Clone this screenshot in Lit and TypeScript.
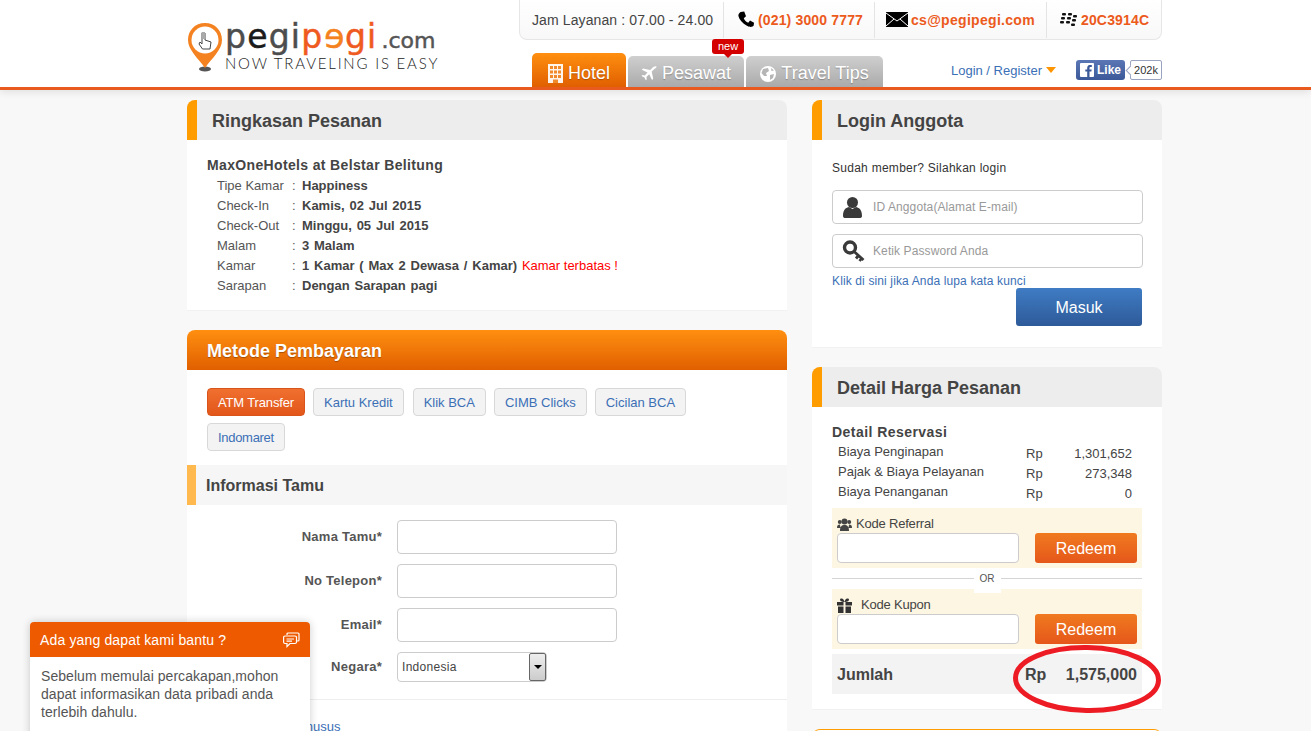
import { LitElement, html, css, svg } from "lit";
import { customElement } from "lit/decorators.js";

const icoPhone = svg`<path d="M4 1 L8 0.5 L10 6 L7.5 8 C8.5 10.5 10 12 12.5 13 L14.5 10.5 L19 13 L18.5 16.5 C17 18 14.5 18.5 11 16.5 C6 13.5 2.5 9.5 1.5 5.5 C1.2 3.5 2.5 2 4 1 Z" fill="#000"/>`;
const icoUser = svg`<circle cx="10" cy="6.5" r="5.5" fill="#3a3a3a"/><path d="M0.5 20 C0.5 13 4 11.5 6.5 11 L10 13 L13.5 11 C16 11.5 19.5 13 19.5 20 C19.5 21.5 18.5 22 17 22 L3 22 C1.5 22 0.5 21.5 0.5 20 Z" fill="#3a3a3a"/>`;
const icoKey = svg`<circle cx="7.5" cy="7.5" r="5.5" fill="none" stroke="#3a3a3a" stroke-width="3.4"/><path d="M11.5 11.5 L21 20 M16 15.5 L13.5 18.5 M19 18.5 L17 21" fill="none" stroke="#3a3a3a" stroke-width="2.8"/>`;

@customElement("app-root")
export class AppRoot extends LitElement {
  static styles = css`
    :host { display: block; position: relative; height: 731px; overflow: hidden; background: #f8f8f8; font-family: "Liberation Sans", Arial, sans-serif; color: #444; font-size: 12px; }
    * { box-sizing: border-box; }
    a { color: #3b6fb6; text-decoration: none; }
    .hdr { height: 90px; background: #fff; border-bottom: 3px solid #e85a1e; box-shadow: 0 2px 8px rgba(0,0,0,.1); }
    .wrap { width: 975px; margin-left: 187px; display: flex; justify-content: space-between; height: 87px; }
    .logo { width: 260px; padding-top: 18px; display: flex; gap: 2px; }
    .pin { width: 36px; height: 54px; flex: none; margin-top: 2px; }
    .lt { display: flex; flex-direction: column; }
    .lname { font-family: "DejaVu Sans", sans-serif; font-size: 33px; line-height: 38px; letter-spacing: 1.2px; color: #4d4d4d; white-space: nowrap; height: 38px; -webkit-text-stroke: .5px currentColor; }
    .lname .k { color: #1a1a1a; } .lname .o { color: #ef5a1f; } .lname .o2 { color: #f58220; display: inline-block; transform: scaleX(-1); }
    .lname .com { font-size: 22px; letter-spacing: 0; color: #555; margin-left: 4px; }
    .ltag { font-family: "Lato", sans-serif; font-weight: 300; font-size: 15px; line-height: 14px; letter-spacing: 1.8px; color: #222; white-space: nowrap; }
    .hr { width: 643px; display: flex; flex-direction: column; }
    .info { height: 40px; display: flex; align-items: center; background: linear-gradient(#fff,#f8f8f8); border: 1px solid #e6e6e6; border-top: 0; border-radius: 0 0 8px 8px; font-size: 14px; }
    .cell { height: 36px; display: flex; align-items: center; padding: 0 12px; border-left: 1px solid #e4e4e4; font-weight: 700; color: #ec5a1c; gap: 3px; white-space: nowrap; letter-spacing: .15px; }
    .cell:first-child { border: 0; font-weight: 400; color: #444; width: 203px; padding-left: 12px; letter-spacing: .11px; }
    .cell svg { flex: none; }
    .c2 { width: 151px; padding-left: 13px; } .c3 { width: 172px; padding-left: 11px; letter-spacing: .3px; } .c4 { width: 116px; padding-left: 12px; gap: 4px; }
    .navrow { display: flex; justify-content: space-between; align-items: flex-end; flex: 1; padding-left: 13px; }
    .tabs { display: flex; align-items: flex-end; gap: 2px; height: 47px; }
    .tab { position: relative; height: 31px; padding-top: 4px; border-radius: 5px 5px 0 0; background: linear-gradient(#cfcfcf,#aaa); color: #fff; font-size: 18px; display: flex; align-items: center; justify-content: center; gap: 5px; text-shadow: 0 1px 1px rgba(0,0,0,.25); }
    .tab.on { height: 34px; width: 94px; padding-top: 7px; background: linear-gradient(#ff8f10,#e05f00); }
    .t2 { width: 116px; } .t3 { width: 137px; }
    .new { position: absolute; top: -17px; left: 84px; width: 32px; height: 15px; background: #d40000; color: #fff; font-size: 11px; border-radius: 3px; text-align: center; line-height: 14px; text-shadow: none; }
    .new::after { content: ""; position: absolute; left: 12px; top: 15px; border: 4px solid transparent; border-top-color: #d40000; border-bottom: 0; }
    .navr { display: flex; align-items: center; height: 20px; margin-bottom: 7px; }
    .logr { display: flex; align-items: center; gap: 4px; font-size: 13px; margin-right: 20px; }
    .tri { width: 0; height: 0; border: 5px solid transparent; border-top: 6px solid #ff9500; border-bottom: 0; }
    .fb { width: 49px; height: 20px; background: linear-gradient(#5a76b5,#3b5998); border-radius: 3px; color: #fff; font-weight: 700; font-size: 12px; display: flex; align-items: center; gap: 3px; padding-left: 4px; }
    .fbn { position: relative; width: 32px; height: 20px; margin-left: 5px; border: 1px solid #9aa3c0; border-radius: 2px; background: #fff; font-size: 11px; color: #333; text-align: center; line-height: 18px; }
    .fbn::before { content: ""; position: absolute; left: -4px; top: 6px; width: 6px; height: 6px; background: #fff; border-left: 1px solid #9aa3c0; border-bottom: 1px solid #9aa3c0; transform: rotate(45deg); }
    .main { width: 975px; margin: 10px 0 0 187px; display: flex; justify-content: space-between; align-items: flex-start; }
    .col { display: flex; flex-direction: column; gap: 20px; }
    .l { width: 600px; } .r { width: 350px; }
    .card { background: #fff; border-radius: 8px 8px 0 0; overflow: hidden; box-shadow: 0 1px 1px rgba(0,0,0,.03); }
    .ch { height: 40px; background: #ededed; border-left: 10px solid #ff9c00; padding: 1px 0 0 15px; font-size: 18px; font-weight: 700; color: #444; line-height: 40px; }
    .ch.orange { background: linear-gradient(#ff8f10,#e05f00); border-left: 0; padding-left: 20px; color: #fff; text-shadow: 0 1px 1px rgba(0,0,0,.3); }
    .b1 { padding: 15px 20px 14px; height: 170px; }
    .htl { font-size: 14px; font-weight: 700; height: 21px; line-height: 20px; letter-spacing: .35px; }
    .rw { display: grid; grid-template-columns: 75px 10px 1fr; padding-left: 10px; line-height: 20px; font-size: 13px; color: #555; }
    .rw b { color: #444; word-spacing: 1.2px; } .rw i { font-style: normal; color: #f00; font-weight: 400; word-spacing: 0; }
    .chips { display: flex; flex-wrap: wrap; gap: 7px 8px; padding: 18px 20px 14px; }
    .chip { height: 28px; padding: 1px 10px 0; border: 1px solid #d8d8d8; border-radius: 4px; background: #f3f3f3; color: #3b6fb6; line-height: 26px; font-size: 13px; }
    .chip.on { background: linear-gradient(#f07030,#e2561a); border-color: #d9541a; color: #fff; letter-spacing: -.15px; }
    .chip.klik { margin-left: 1px; }
    .chip.ind { letter-spacing: -.3px; }
    .sh { height: 40px; background: #f6f6f6; border-left: 9px solid #ffb94f; padding: 1px 0 0 10px; font-size: 16px; font-weight: 700; line-height: 40px; }
    .form { display: flex; flex-direction: column; gap: 10px; padding: 15px 0 17px; border-bottom: 1px solid #eee; }
    .fr { display: flex; align-items: center; gap: 15px; }
    .fr label { width: 195px; padding-bottom: 2px; text-align: right; font-weight: 700; font-size: 13px; color: #555; letter-spacing: .25px; }
    .in { height: 34px; width: 220px; border: 1px solid #ccc; border-radius: 4px; background: #fff; }
    .sel { height: 30px; width: 150px; border: 1px solid #ccc; border-radius: 4px; display: flex; align-items: center; justify-content: space-between; padding-left: 4px; letter-spacing: .3px; }
    .arr { width: 17px; height: 28px; background: linear-gradient(#eee,#ccc); border: 1px solid #666; border-radius: 2px; display: flex; align-items: center; justify-content: center; }
    .arr::after { content: ""; border: 4px solid transparent; border-top: 4px solid #000; border-bottom: 0; }
    .mus { padding: 19px 0 0 40px; height: 60px; font-size: 13px; }
    .b2 { height: 207px; padding: 20px 20px 0; letter-spacing: .27px; }
    .lead { line-height: 16px; color: #333; }
    .lin { display: flex; align-items: center; width: 311px; height: 34px; margin-top: 14px; border: 1px solid #ccc; border-radius: 4px; padding-left: 9px; gap: 8px; color: #999; letter-spacing: .1px; }
    .lin svg { width: 23px; flex: none; }
    .lin + .lin { margin-top: 10px; }
    .forgot { line-height: 14px; margin-top: 6px; display: block; letter-spacing: .13px; }
    .masuk { display: block; width: 126px; height: 38px; margin: 0 0 0 184px; padding-top: 1px; background: linear-gradient(#3f7cc4,#2e5a99); border-radius: 3px; color: #fff; font-size: 16px; letter-spacing: 0; text-align: center; line-height: 38px; }
    .b3 { height: 302px; padding: 16px 20px 0; }
    .b3h { font-size: 14px; font-weight: 700; height: 21px; line-height: 18px; letter-spacing: .45px; }
    .pr { display: grid; grid-template-columns: 188px 40px 66px; padding-left: 6px; height: 20px; font-size: 13px; }
    .pr span { line-height: 20px; } .pr span:last-child { text-align: right; }
    .pr span:first-child { margin-top: -2px; }
    .pb { height: 60px; background: #fdf6e3; padding: 8px 5px 0; margin-top: 4px; }
    .pl { height: 16px; line-height: 14px; display: flex; gap: 4px; align-items: center; font-size: 13px; letter-spacing: -.2px; }
    .pl.wide { gap: 9px; }
    .po { display: flex; justify-content: space-between; margin-top: 1px; }
    .pi { width: 182px; height: 30px; border: 1px solid #ccc; border-radius: 4px; background: #fff; }
    .rd { width: 102px; height: 30px; padding-top: 1px; background: linear-gradient(#f07a20,#e5571a); border-radius: 3px; color: #fff; font-size: 16px; text-align: center; line-height: 30px; }
    .ordiv { display: flex; align-items: center; height: 21px; font-size: 10px; color: #555; }
    .ordiv::before, .ordiv::after { content: ""; flex: 1; height: 1px; background: #d5d5d5; }
    .ordiv span { position: relative; top: 2px; height: 25px; padding: 0 6px; background: #fff; line-height: 21px; }
    .ordiv + .pb { margin-top: 0; }
    .tot { height: 40px; margin-top: 5px; padding: 1px 5px 0; background: #f3f3f3; display: grid; grid-template-columns: 188px 1fr auto; align-items: center; font-weight: 700; font-size: 16px; }
    .next { height: 30px; border-top: 1px solid #ff9c00; border-radius: 8px 8px 0 0; background: #fff; }
    .chat { position: absolute; left: 30px; top: 622px; width: 280px; height: 120px; background: #fff; border-radius: 4px 4px 0 0; box-shadow: 0 0 8px rgba(0,0,0,.2); }
    .chh { height: 35px; background: #ee5a00; border-radius: 4px 4px 0 0; color: #fff; font-size: 14px; display: flex; justify-content: space-between; align-items: center; padding: 0 10px; letter-spacing: .15px; }
    .chb { padding: 10px 11px; font-size: 14px; line-height: 18px; color: #555; letter-spacing: .05px; }
    .ring { position: absolute; left: 1010px; top: 640px; pointer-events: none; }
  `;

  render() {
    return html`
      <div class="hdr"><div class="wrap">
        <div class="logo">
          <svg class="pin" viewBox="0 0 36 54">
            <ellipse cx="18" cy="49" rx="6" ry="2.5" fill="#555"/>
            <path d="M18 3 C8 3 1 10.5 1 20 C1 30 11 38 18 48 C25 38 35 30 35 20 C35 10.5 28 3 18 3 Z" fill="#f58220"/>
            <circle cx="18" cy="20" r="13.5" fill="#fff"/>
            <path d="M15 13 L15 24 L13 22 L12 24 L15.5 29 L23 29 L24 22 L18 20 L18 13 Z" fill="#fff" stroke="#444" stroke-width="1"/>
            <rect x="14.6" y="12" width="3.4" height="7" fill="#aaa"/>
          </svg>
          <div class="lt">
            <div class="lname">p<span class="k">e</span>gi<span class="o">p</span><span class="o2">e</span><span class="o">gi</span><span class="com">.com</span></div>
            <div class="ltag">NOW TRAVELING IS EASY</div>
          </div>
        </div>
        <div class="hr">
          <div class="info">
            <div class="cell">Jam Layanan : 07.00 - 24.00</div>
            <div class="cell c2"><svg width="18" height="17" viewBox="0 0 20 19">${icoPhone}</svg>(021) 3000 7777</div>
            <div class="cell c3">
              <svg width="22" height="15" viewBox="0 0 22 15"><rect width="22" height="15" fill="#000"/><path d="M0 1 L11 9 L22 1 M0 14 L8 7 M22 14 L14 7" fill="none" stroke="#fff" stroke-width="1"/></svg>cs@pegipegi.com</div>
            <div class="cell c4">
              <svg width="18" height="14" viewBox="0 0 18 14" fill="#111"><rect x="3" y="0" width="4" height="2.6" rx="1"/><rect x="9" y="0" width="4" height="2.6" rx="1"/><rect x="2" y="4" width="4" height="2.6" rx="1"/><rect x="8" y="4" width="4" height="2.6" rx="1"/><rect x="14" y="2" width="4" height="2.6" rx="1"/><rect x="13" y="6" width="4" height="2.6" rx="1"/><rect x="1" y="8" width="4" height="2.6" rx="1"/><rect x="7" y="8" width="4" height="2.6" rx="1"/><rect x="12" y="10.5" width="4" height="2.6" rx="1"/></svg>20C3914C</div>
          </div>
          <div class="navrow">
            <div class="tabs">
              <div class="tab on">
                <svg width="15" height="19" viewBox="0 0 15 19"><rect width="15" height="19" fill="#fff" opacity=".92"/><g fill="#f08a2a"><rect x="2" y="2" width="3" height="3"/><rect x="6" y="2" width="3" height="3"/><rect x="10" y="2" width="3" height="3"/><rect x="2" y="6.5" width="3" height="3"/><rect x="6" y="6.5" width="3" height="3"/><rect x="10" y="6.5" width="3" height="3"/><rect x="2" y="11" width="3" height="3"/><rect x="6" y="11" width="3" height="3"/><rect x="10" y="11" width="3" height="3"/><rect x="5" y="15.5" width="5" height="3.5"/></g></svg>Hotel</div>
              <div class="tab t2">
                <svg width="16" height="15" viewBox="0 0 16 15"><path d="M15.5 0.5 C14 0 12.5 .8 11 2.2 L9.2 4 L2 2.5 L.8 3.7 L6.5 6.6 L3.8 9.4 L1.5 9 L.5 10 L3.4 11.4 L4.8 14.3 L5.8 13.3 L5.4 11 L8.2 8.3 L11 14 L12.2 12.8 L10.7 5.6 L12.6 3.8 C14 2.3 16 1.8 15.5 .5 Z" fill="#fff"/></svg>Pesawat<span class="new">new</span></div>
              <div class="tab t3">
                <svg width="16" height="16" viewBox="0 0 16 16"><circle cx="8" cy="8" r="8" fill="#fff"/><path d="M3 3 L8 2 L9 5 L6 7 L7 10 L4 10 L1.5 7 Z M10 9 L14 8 L13 12 L10 14 Z M11 2 L14 4.5 L11.5 5 Z" fill="#b5b5b5"/></svg>Travel Tips</div>
            </div>
            <div class="navr">
              <div class="logr"><a href="#">Login / Register</a><span class="tri"></span></div>
              <div class="fb"><svg width="14" height="14" viewBox="0 0 14 14"><rect width="14" height="14" fill="#fff" rx="1"/><path d="M9.5 14 L9.5 8.6 L11.4 8.6 L11.7 6.4 L9.5 6.4 L9.5 5 C9.5 4.3 9.8 3.9 10.6 3.9 L11.8 3.9 L11.8 2 C10 1.8 7.2 1.6 7.2 4.7 L7.2 6.4 L5.3 6.4 L5.3 8.6 L7.2 8.6 L7.2 14 Z" fill="#3b5998"/></svg>Like</div>
              <div class="fbn">202k</div>
            </div>
          </div>
        </div>
      </div></div>
      <div class="main">
        <div class="col l">
          <div class="card">
            <div class="ch">Ringkasan Pesanan</div>
            <div class="b1">
              <div class="htl">MaxOneHotels at Belstar Belitung</div>
              ${[["Tipe Kamar","Happiness"],["Check-In","Kamis, 02 Jul 2015"],["Check-Out","Minggu, 05 Jul 2015"],["Malam","3 Malam"]].map(([a,b])=>html`<div class="rw"><span>${a}</span><span>:</span><b>${b}</b></div>`)}
              <div class="rw"><span>Kamar</span><span>:</span><b>1 Kamar ( Max 2 Dewasa / Kamar) <i>Kamar terbatas !</i></b></div>
              <div class="rw"><span>Sarapan</span><span>:</span><b>Dengan Sarapan pagi</b></div>
            </div>
          </div>
          <div class="card">
            <div class="ch orange">Metode Pembayaran</div>
            <div class="chips">
              <span class="chip on">ATM Transfer</span><span class="chip">Kartu Kredit</span><span class="chip klik">Klik BCA</span><span class="chip">CIMB Clicks</span><span class="chip">Cicilan BCA</span><span class="chip ind">Indomaret</span>
            </div>
            <div class="sh">Informasi Tamu</div>
            <div class="form">
              <div class="fr"><label>Nama Tamu*</label><div class="in"></div></div>
              <div class="fr"><label>No Telepon*</label><div class="in"></div></div>
              <div class="fr"><label>Email*</label><div class="in"></div></div>
              <div class="fr"><label>Negara*</label><div class="sel">Indonesia<span class="arr"></span></div></div>
            </div>
            <div class="mus"><a href="#">Permintaan Khusus</a></div>
          </div>
        </div>
        <div class="col r">
          <div class="card">
            <div class="ch">Login Anggota</div>
            <div class="b2">
              <div class="lead">Sudah member? Silahkan login</div>
              <div class="lin"><svg height="22" viewBox="0 0 22 22">${icoUser}</svg>ID Anggota(Alamat E-mail)</div>
              <div class="lin"><svg height="22" viewBox="0 0 22 22">${icoKey}</svg>Ketik Password Anda</div>
              <a class="forgot" href="#">Klik di sini jika Anda lupa kata kunci</a>
              <div class="masuk">Masuk</div>
            </div>
          </div>
          <div class="card">
            <div class="ch">Detail Harga Pesanan</div>
            <div class="b3">
              <div class="b3h">Detail Reservasi</div>
              <div class="pr"><span>Biaya Penginapan</span><span>Rp</span><span>1,301,652</span></div>
              <div class="pr"><span>Pajak &amp; Biaya Pelayanan</span><span>Rp</span><span>273,348</span></div>
              <div class="pr"><span>Biaya Penanganan</span><span>Rp</span><span>0</span></div>
              <div class="pb">
                <div class="pl"><svg width="15" height="13" viewBox="0 0 15 13" fill="#444"><circle cx="7.5" cy="3.5" r="3"/><circle cx="2.8" cy="4" r="2"/><circle cx="12.2" cy="4" r="2"/><path d="M3 13 C3 8 5 7 7.5 7 C10 7 12 8 12 13 Z M0 10 C0 7 1 6.5 3 6.5 L3.5 10 Z M15 10 C15 7 14 6.5 12 6.5 L11.5 10 Z"/></svg>Kode Referral</div>
                <div class="po"><div class="pi"></div><div class="rd">Redeem</div></div>
              </div>
              <div class="ordiv"><span>OR</span></div>
              <div class="pb">
                <div class="pl wide"><svg width="15" height="15" viewBox="0 0 15 15" fill="#333"><rect x="0" y="4" width="15" height="3.5"/><rect x="1" y="8.5" width="13" height="6.5"/><path d="M7 4 C3 4 2 1 4 .5 C6 0 7 2 7.5 4 C8 2 9 0 11 .5 C13 1 12 4 8 4 Z"/><rect x="6.5" y="4" width="2" height="11" fill="#fdf6e3"/></svg>Kode Kupon</div>
                <div class="po"><div class="pi"></div><div class="rd">Redeem</div></div>
              </div>
              <div class="tot"><span>Jumlah</span><span>Rp</span><span>1,575,000</span></div>
            </div>
          </div>
          <div class="next"></div>
        </div>
      </div>
      <div class="chat">
        <div class="chh">Ada yang dapat kami bantu ?
          <svg width="17" height="16" viewBox="0 0 17 16" fill="none" stroke="#fff" stroke-width="1.2"><path d="M4 3 L4 2 C4 1.3 4.5 1 5 1 L15 1 C15.6 1 16 1.4 16 2 L16 8 C16 8.6 15.6 9 15 9 L14 9"/><path d="M2 4 L12 4 C13 4 13.5 4.5 13.5 5 L13.5 10 C13.5 11 13 11.5 12 11.5 L7 11.5 L4 14.5 L4 11.5 L2 11.5 C1 11.5 .6 11 .6 10 L.6 5 C.6 4.5 1 4 2 4 Z"/><path d="M3.5 7 L11 7 M3.5 9.2 L9 9.2"/></svg>
        </div>
        <div class="chb">Sebelum memulai percakapan,mohon dapat informasikan data pribadi anda terlebih dahulu.</div>
      </div>
      <svg class="ring" width="154" height="78" viewBox="0 0 154 78"><ellipse cx="77" cy="39" rx="71.5" ry="31.5" fill="none" stroke="#ed1c24" stroke-width="5" transform="rotate(1 77 39)"/></svg>
    `;
  }
}
